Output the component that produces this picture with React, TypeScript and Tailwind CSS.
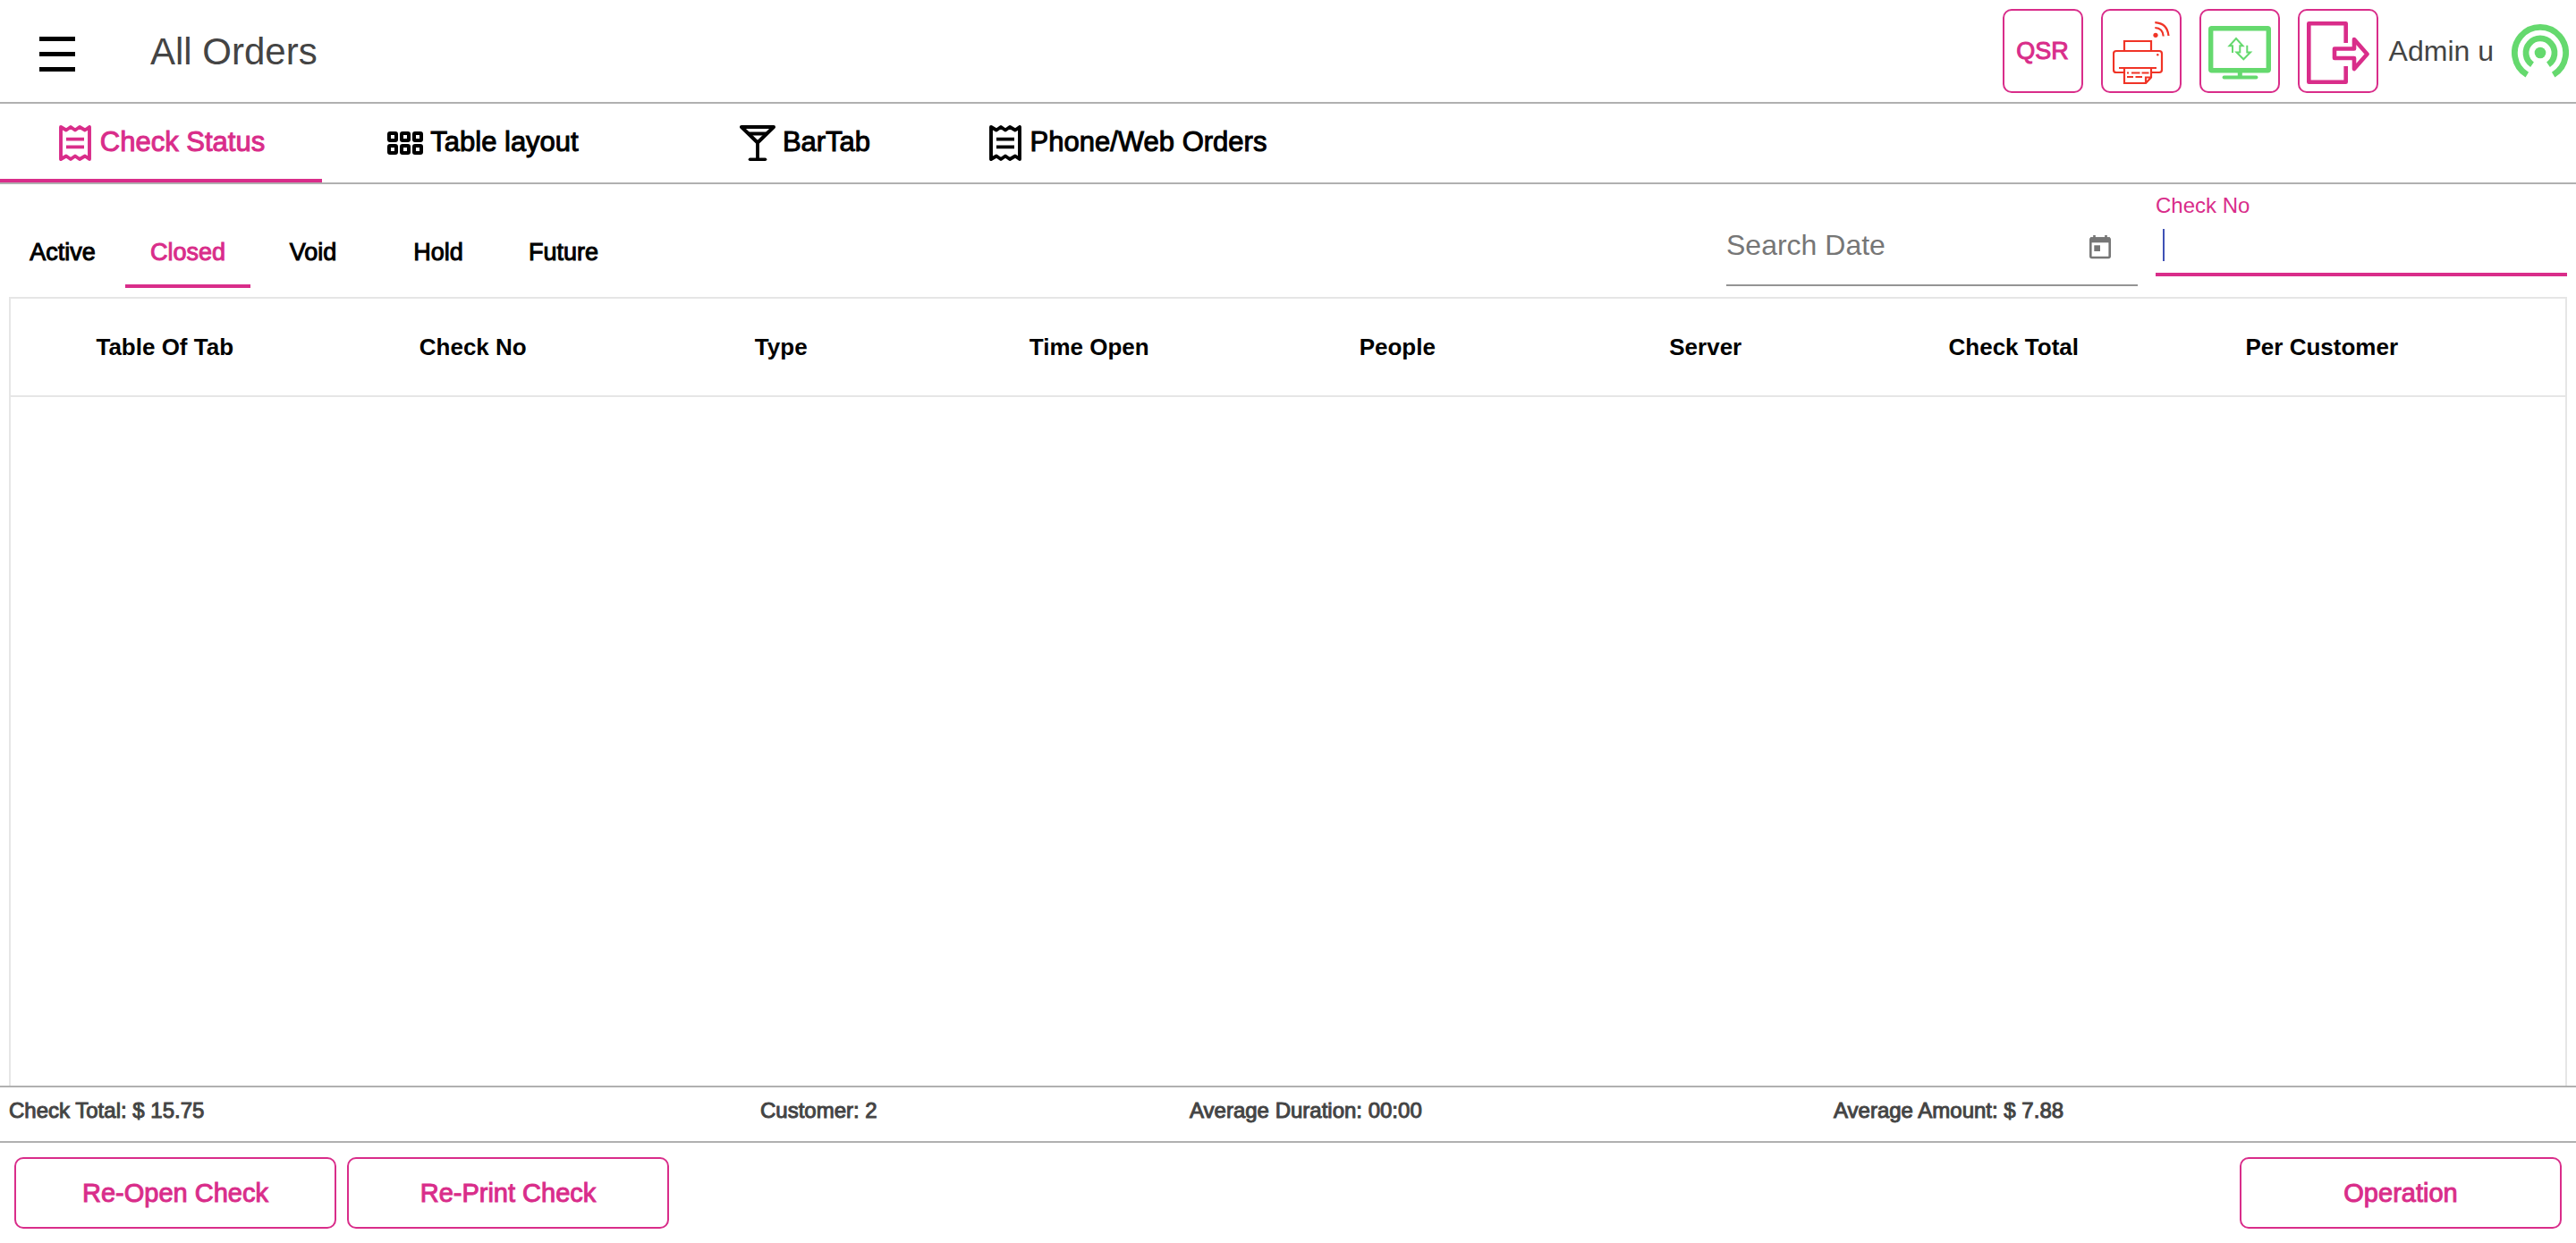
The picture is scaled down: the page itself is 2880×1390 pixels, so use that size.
import React from 'react';

function ReceiptIcon() {
  return (
    <svg width="40" height="40" viewBox="0 0 40 40" fill="none" stroke="currentColor" className="mt-0.5 shrink-0" aria-hidden="true">
      <path
        d="M4 2L10 5.5L15 2L20 5.5L25 2L31 5.5L36 2V38L31 34.5L25 38L20 34.5L15 38L10 34.5L4 38Z"
        strokeWidth="3.9"
        strokeLinejoin="round"
      />
      <path d="M10 15.7H30M10 24.3H30" strokeWidth="3.8" />
    </svg>
  );
}

function GridIcon() {
  const xs = [2, 16, 30];
  return (
    <svg width="40" height="26" viewBox="0 0 40 26" fill="none" stroke="currentColor" strokeWidth="4" className="mt-0.5 shrink-0" aria-hidden="true">
      {xs.map((x) => (
        <g key={x}>
          <rect x={x} y="2" width="8" height="8" rx="1" />
          <rect x={x} y="16" width="8" height="8" rx="1" />
        </g>
      ))}
    </svg>
  );
}

function CocktailIcon() {
  return (
    <svg width="40" height="40" viewBox="0 0 40 40" fill="none" stroke="currentColor" className="mt-0.5 shrink-0" aria-hidden="true">
      <path d="M2 2H38L20 19.5Z" strokeWidth="4" strokeLinejoin="round" />
      <path d="M9 9.5H31M20 19V38" strokeWidth="3.8" />
      <path d="M11.5 38.2H28.5" strokeWidth="3.6" strokeLinecap="round" />
    </svg>
  );
}

function PrinterIcon() {
  return (
    <svg width="64" height="70" viewBox="0 0 64 70" fill="none" stroke="#f03426" strokeWidth="2.2" className="mt-1" aria-hidden="true">
      <path d="M13 32V22H43V32" />
      <path d="M13 57H4Q1 57 1 54V36Q1 33 4 33H52Q55 33 55 36V54Q55 57 52 57H43" />
      <path d="M7 52H49M13 52V69H37L43 62.5V52M37 69V62.5H43" />
      <path d="M16 57.5H18M21 57.5H30.5M32.5 57.5H40.5M16 62H23M25.5 62H33" />
      <circle cx="50.3" cy="37.3" r="1.2" fill="#f03426" stroke="none" />
      <circle cx="48" cy="15.3" r="2.6" fill="#f03426" stroke="none" />
      <path d="M47.3 7Q56 7.5 56.7 16.5M47.3 1.2Q61 2 62.5 16" />
    </svg>
  );
}

function MonitorIcon() {
  return (
    <svg width="70" height="60" viewBox="0 0 70 60" fill="none" stroke="#65d96e" className="mt-1" aria-hidden="true">
      <rect x="2.7" y="2.7" width="64.6" height="47" rx="1" strokeWidth="5.4" />
      <path d="M35.3 50V57" strokeWidth="5" />
      <path d="M17.5 57.5H53.5" strokeWidth="3.8" strokeLinecap="round" />
      <path d="M27 30V22.3H23.5L31 14L38.5 22.3H35.3V29.5H31.5L39.3 37.3L47 29.5H43.3V21.7" strokeWidth="2" />
    </svg>
  );
}

function ExitIcon() {
  return (
    <svg width="70" height="70" viewBox="0 0 70 70" fill="none" stroke="#d92d8a" strokeWidth="4.6" strokeLinejoin="round" className="mt-1" aria-hidden="true">
      <path d="M43.7 24V2.3H2.3V67.7H43.7V50" />
      <path d="M31 30.5H53V20L67.5 36.5L53 53V41H31Z" />
    </svg>
  );
}

function SignalIcon() {
  return (
    <svg width="64" height="60" viewBox="0 0 64 60" fill="none" stroke="#65d96e" strokeWidth="6.8" aria-hidden="true">
      <circle cx="32" cy="32" r="6.3" fill="#65d96e" stroke="none" />
      <path d="M23 45.2A16 16 0 1 1 41 45.2" />
      <path d="M17.3 56.6A28.6 28.6 0 1 1 46.7 56.6" />
    </svg>
  );
}

function CalendarIcon() {
  return (
    <svg width="24" height="28" viewBox="0 0 24 28" fill="none" stroke="#767676" className="mt-1 shrink-0" aria-hidden="true">
      <rect x="1.3" y="4.5" width="21.4" height="21.5" rx="1.5" strokeWidth="2.6" />
      <path d="M1 6.3H23" strokeWidth="6" />
      <path d="M5.5 1V5M18.5 1V5" strokeWidth="2.6" />
      <rect x="5.3" y="12.3" width="6.7" height="6.7" fill="#767676" stroke="none" />
    </svg>
  );
}

const mainTabs = [
  { label: 'Check Status', icon: <ReceiptIcon />, active: true },
  { label: 'Table layout', icon: <GridIcon /> },
  { label: 'BarTab', icon: <CocktailIcon /> },
  { label: 'Phone/Web Orders', icon: <ReceiptIcon /> },
];

const subTabs = ['Active', 'Closed', 'Void', 'Hold', 'Future'];

const columns = ['Table Of Tab', 'Check No', 'Type', 'Time Open', 'People', 'Server', 'Check Total', 'Per Customer'];

const iconButton = 'flex h-[94px] w-[90px] items-center justify-center rounded-[10px] border-2 border-[#d92d8a] text-[#d92d8a]';
const actionButton =
  'h-20 w-[360px] rounded-[10px] border-2 border-[#d92d8a] text-[29px] leading-8 text-[#d92d8a] [-webkit-text-stroke:1px]';

export default function App() {
  return (
    <div className="flex h-screen flex-col overflow-hidden bg-white font-['Liberation_Sans',Arial,sans-serif] text-black">
      <header className="flex h-[116px] shrink-0 items-center border-b-2 border-[#b0b0b0] pr-2 pl-11">
        <button aria-label="Menu" className="flex flex-col gap-3 pt-1.5">
          <span className="h-[5px] w-10 bg-black" />
          <span className="h-[5px] w-10 bg-black" />
          <span className="h-[5px] w-10 bg-black" />
        </button>
        <h1 className="ml-[84px] grow pt-0.5 text-[42px] leading-12 text-[#444]">All Orders</h1>
        <div className="flex items-center gap-5">
          <button className={`${iconButton} text-[27px] [-webkit-text-stroke:1px]`}>QSR</button>
          <button aria-label="Printer status" className={iconButton}><PrinterIcon /></button>
          <button aria-label="Sync display" className={iconButton}><MonitorIcon /></button>
          <button aria-label="Log out" className={iconButton}><ExitIcon /></button>
        </div>
        <span className="ml-3 text-[32px] leading-10 text-[#444]">Admin u</span>
        <span className="ml-5"><SignalIcon /></span>
      </header>

      <nav className="flex h-[90px] shrink-0 border-b-2 border-[#b0b0b0]">
        {mainTabs.map((t) => (
          <button
            key={t.label}
            className={`flex w-1/8 items-center justify-center gap-2 border-b-4 pt-0.5 text-[31px] leading-10 whitespace-nowrap [-webkit-text-stroke:1px] ${
              t.active ? 'border-[#d92d8a] text-[#d92d8a]' : 'border-transparent'
            }`}
          >
            {t.icon}
            {t.label}
          </button>
        ))}
      </nav>

      <section className="flex h-[126px] shrink-0 items-start justify-between pr-2.5">
        <div className="flex h-[116px]">
          {subTabs.map((t) => (
            <button
              key={t}
              className={`h-full w-[140px] border-b-4 pt-10 text-[27px] [-webkit-text-stroke:1px] ${
                t === 'Closed' ? 'border-[#d92d8a] text-[#d92d8a]' : 'border-transparent'
              }`}
            >
              {t}
            </button>
          ))}
        </div>
        <div className="flex items-start gap-5">
          <label className="flex h-[114px] w-[460px] items-center border-b-2 border-[#949494] pt-6 pr-[30px]">
            <input aria-label="Search Date" placeholder="Search Date" className="min-w-0 grow text-[32px] leading-10 outline-none placeholder:text-[#767676]" />
            <CalendarIcon />
          </label>
          <div className="flex h-[103px] w-[460px] flex-col border-b-4 border-[#d92d8a] pt-2">
            <label htmlFor="check-no" className="text-2xl text-[#d92d8a]">Check No</label>
            <div className="mt-2.5 flex items-center pl-2">
              <span className="h-9 w-0.5 bg-[#3f51b5]" />
              <input id="check-no" className="h-9 min-w-0 grow text-[32px] outline-none" />
            </div>
          </div>
        </div>
      </section>

      <main className="mx-2.5 grow border-x-2 border-t-2 border-[#e6e6e6]">
        <table className="w-full table-fixed">
          <thead>
            <tr className="h-[109px] border-b-2 border-[#e6e6e6]">
              {columns.map((c) => (
                <th key={c} className="p-0 text-[26px]">{c}</th>
              ))}
              <td className="w-25" />
            </tr>
          </thead>
        </table>
      </main>

      <footer className="h-44 shrink-0 border-t-2 border-[#b0b0b0]">
        <div className="grid h-[62px] grid-cols-[42fr_24fr_36fr_41fr] border-b-2 border-[#b0b0b0] px-2.5 pt-2.5 text-2xl text-[#444] [-webkit-text-stroke:1px]">
          <span>Check Total: $ 15.75</span>
          <span>Customer: 2</span>
          <span>Average Duration: 00:00</span>
          <span>Average Amount: $ 7.88</span>
        </div>
        <div className="flex gap-3 px-4 py-4">
          <button className={actionButton}>Re-Open Check</button>
          <button className={actionButton}>Re-Print Check</button>
          <button className={`${actionButton} ml-auto`}>Operation</button>
        </div>
      </footer>
    </div>
  );
}
